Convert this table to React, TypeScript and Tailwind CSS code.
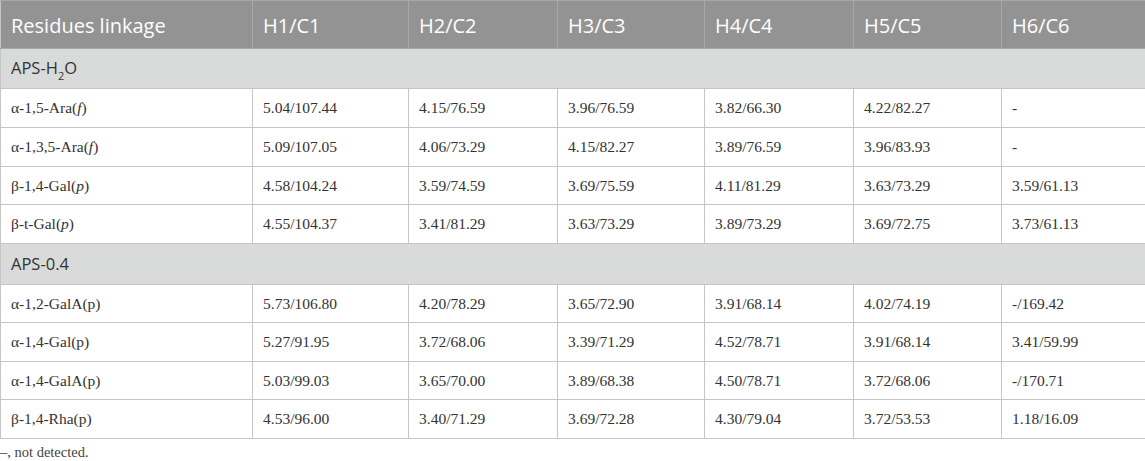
import React from "react";

type Row = { name: React.ReactNode; vals: string[]; h: string };

const sans = "font-['Open_Sans',sans-serif]";
const serif = "font-['Liberation_Serif',serif]";

const groups: Array<{ label: React.ReactNode; h: string; rows: Row[] }> = [
  {
    label: (
      <>
        APS-H<sub className="text-[11px] align-[-3px]">2</sub>O
      </>
    ),
    h: "h-[40px]",
    rows: [
      {
        name: (
          <>
            α-1,5-Ara(<i>f</i>)
          </>
        ),
        vals: ["5.04/107.44", "4.15/76.59", "3.96/76.59", "3.82/66.30", "4.22/82.27", "-"],
        h: "h-[39px]",
      },
      {
        name: (
          <>
            α-1,3,5-Ara(<i>f</i>)
          </>
        ),
        vals: ["5.09/107.05", "4.06/73.29", "4.15/82.27", "3.89/76.59", "3.96/83.93", "-"],
        h: "h-[39px]",
      },
      {
        name: (
          <>
            β-1,4-Gal(<i>p</i>)
          </>
        ),
        vals: ["4.58/104.24", "3.59/74.59", "3.69/75.59", "4.11/81.29", "3.63/73.29", "3.59/61.13"],
        h: "h-[38px]",
      },
      {
        name: (
          <>
            β-t-Gal(<i>p</i>)
          </>
        ),
        vals: ["4.55/104.37", "3.41/81.29", "3.63/73.29", "3.89/73.29", "3.69/72.75", "3.73/61.13"],
        h: "h-[39px]",
      },
    ],
  },
  {
    label: "APS-0.4",
    h: "h-[41px]",
    rows: [
      { name: "α-1,2-GalA(p)", vals: ["5.73/106.80", "4.20/78.29", "3.65/72.90", "3.91/68.14", "4.02/74.19", "-/169.42"], h: "h-[38px]" },
      { name: "α-1,4-Gal(p)", vals: ["5.27/91.95", "3.72/68.06", "3.39/71.29", "4.52/78.71", "3.91/68.14", "3.41/59.99"], h: "h-[39px]" },
      { name: "α-1,4-GalA(p)", vals: ["5.03/99.03", "3.65/70.00", "3.89/68.38", "4.50/78.71", "3.72/68.06", "-/170.71"], h: "h-[38px]" },
      { name: "β-1,4-Rha(p)", vals: ["4.53/96.00", "3.40/71.29", "3.69/72.28", "4.30/79.04", "3.72/53.53", "1.18/16.09"], h: "h-[39px]" },
    ],
  },
];

const headers = ["Residues linkage", "H1/C1", "H2/C2", "H3/C3", "H4/C4", "H5/C5", "H6/C6"];
const widths = ["w-[252px]", "w-[156px]", "w-[149px]", "w-[147px]", "w-[149px]", "w-[148px]", "w-[144px]"];

export default function App() {
  return (
    <div className="w-[1145px] h-[461px] bg-white overflow-hidden">
      <table className="w-[1145px] table-fixed border-collapse">
        <colgroup>
          {widths.map((w, i) => (
            <col key={i} className={w} />
          ))}
        </colgroup>
        <thead>
          <tr className="h-[48px] bg-[#939393]">
            {headers.map((h, i) => (
              <th
                key={h}
                className={`${sans} text-left font-normal text-white text-[20px] leading-[24px] px-[10px] pt-[3px] border border-[#a8a8a8] ${i === 0 ? "border-l-[#c6c6c6]" : ""}`}
              >
                {h}
              </th>
            ))}
          </tr>
        </thead>
        <tbody>
          {groups.map((g, gi) => (
            <React.Fragment key={gi}>
              <tr className={`${g.h} bg-[#d9dbda]`}>
                <td colSpan={7} className={`${sans} text-[16.5px] text-[#333] px-[10px] border border-[#c6c6c6]`}>
                  {g.label}
                </td>
              </tr>
              {g.rows.map((r, ri) => (
                <tr key={ri} className={r.h}>
                  <td className={`${serif} text-[15.5px] text-[#333] px-[10px] border border-[#c6c6c6]`}>{r.name}</td>
                  {r.vals.map((v, vi) => (
                    <td key={vi} className={`${serif} text-[15.5px] text-[#333] px-[10px] border border-[#c6c6c6]`}>
                      {v}
                    </td>
                  ))}
                </tr>
              ))}
            </React.Fragment>
          ))}
        </tbody>
      </table>
      <p className={`${serif} text-[14.5px] leading-[16px] text-[#444] mt-[5px]`}>–, not detected.</p>
    </div>
  );
}
